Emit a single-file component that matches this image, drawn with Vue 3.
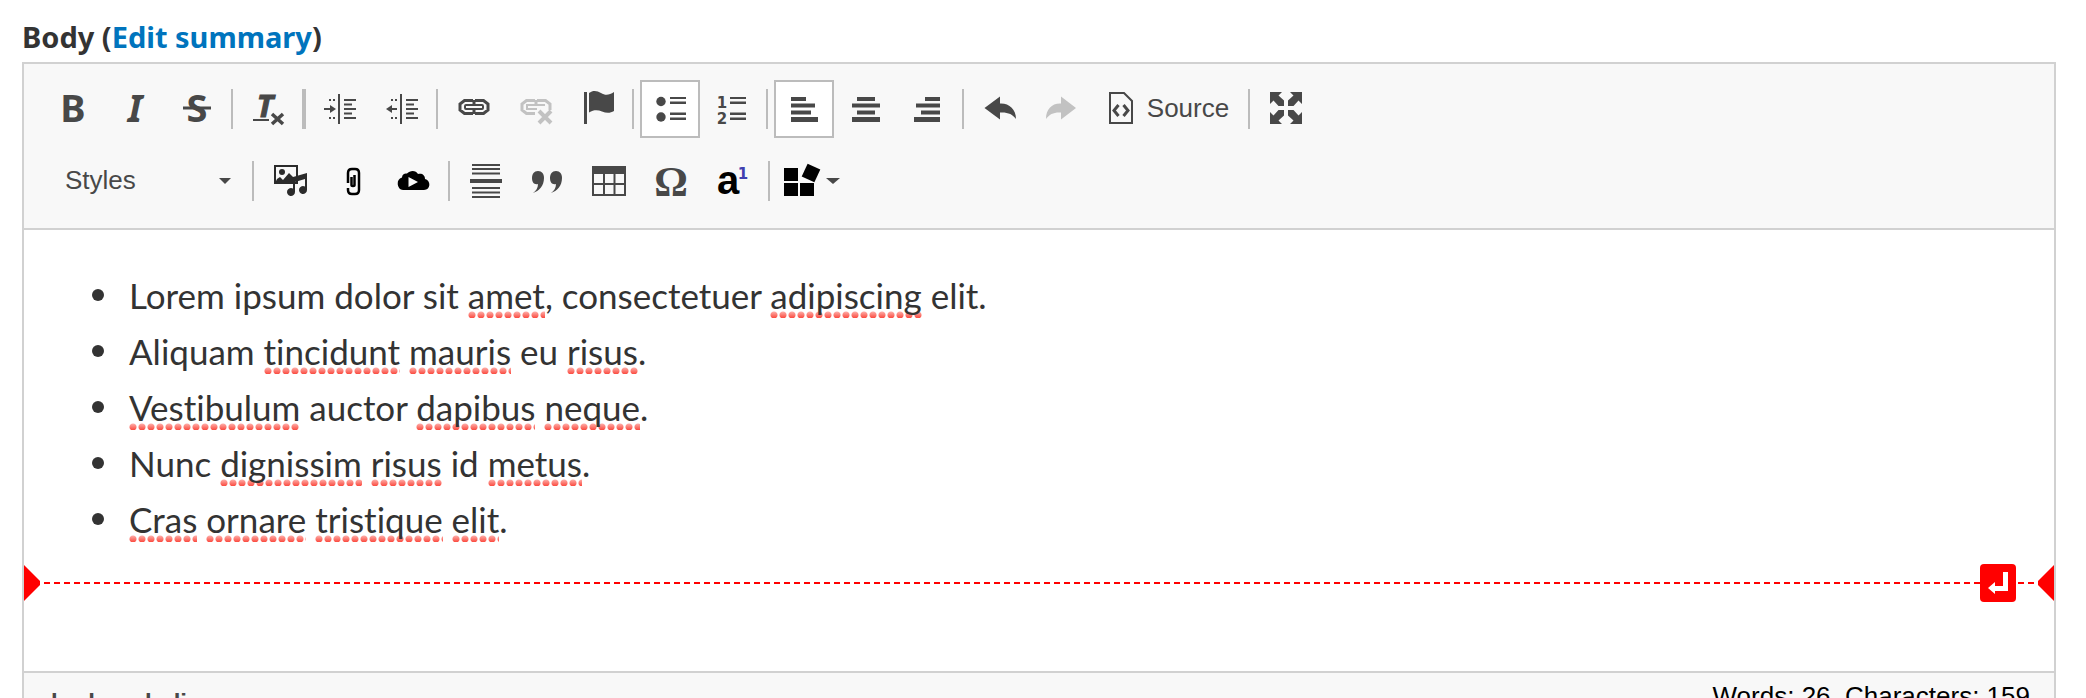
<template>
  <div class="page">
    <div class="field-label">Body (<a href="#summary">Edit summary</a>)</div>

    <div class="editor">
      <div class="toolbar" role="toolbar" aria-label="Editor toolbar">
        <div class="row">
          <button type="button" class="btn" aria-label="Bold">
            <svg class="icon" viewBox="0 0 36 36"><text class="glyph" x="18" y="31" font-size="38">B</text></svg>
          </button>
          <button type="button" class="btn" aria-label="Italic">
            <svg class="icon" viewBox="0 0 36 36"><text class="glyph italic" x="18" y="31" font-size="38">I</text></svg>
          </button>
          <button type="button" class="btn" aria-label="Strikethrough">
            <svg class="icon" viewBox="0 0 36 36">
              <text class="glyph" x="18" y="31" font-size="38">S</text>
              <path d="M4 15.5h28v3H4z" />
            </svg>
          </button>
          <span class="sep" />
          <button type="button" class="btn" aria-label="Remove format">
            <svg class="icon" viewBox="0 0 36 36">
              <text class="glyph italic heavy" x="14" y="26" font-size="31">T</text>
              <path d="M2 28h16v2H2z" />
              <path d="M21 23l11 10M32 23L21 33" class="line" stroke-width="3.5" />
            </svg>
          </button>
          <span class="sep wide" />
          <button type="button" class="btn" aria-label="Increase indent">
            <svg class="icon" viewBox="0 0 36 36">
              <path d="M16 3h2v30h-2zM22 8h12v2H22zM22 12.5h8v2h-8zM22 17h12v2H22zM22 21.5h8v2h-8zM22 26h12v2H22z" />
              <path d="M2 17h6v-3l6 4-6 4v-3H2zM7 8h2v2H7zM11 8h2v2h-2zM7 26h2v2H7zM11 26h2v2h-2z" />
            </svg>
          </button>
          <button type="button" class="btn" aria-label="Decrease indent">
            <svg class="icon" viewBox="0 0 36 36">
              <path d="M16 3h2v30h-2zM22 8h12v2H22zM22 12.5h8v2h-8zM22 17h12v2H22zM22 21.5h8v2h-8zM22 26h12v2H22z" />
              <path d="M13 17H8v-3l-6 4 6 4v-3h5zM7 8h2v2H7zM11 8h2v2h-2zM7 26h2v2H7zM11 26h2v2h-2z" />
            </svg>
          </button>
          <span class="sep" />
          <button type="button" class="btn" aria-label="Link">
            <svg class="icon" viewBox="0 0 36 36">
              <g class="line">
                <path d="M17 9.5H8.5L4 13v6l4.500 3.500H17M19 9.5h8.500L32 13v6l-4.500 3.500H19" stroke-width="3" />
                <rect x="9" y="14" width="18" height="4" rx="1" stroke-width="2" />
                <path d="M18 9v5M18 18v5" stroke-width="3" />
              </g>
            </svg>
          </button>
          <button type="button" class="btn" aria-label="Unlink" disabled>
            <svg class="icon" viewBox="0 0 36 36">
              <g class="line">
                <path d="M17 22.5H8.500L4 19v-6l4.500-3.500H17M19 9.500h8.500L32 13v6" stroke-width="3" />
                <path d="M27 14H9v4h10" stroke-width="2" />
                <path d="M18 9v5" stroke-width="3" />
                <path d="M21 20l12 12M33 20L21 32" stroke-width="4" />
              </g>
            </svg>
          </button>
          <button type="button" class="btn" aria-label="Anchor">
            <svg class="icon" viewBox="0 0 36 36">
              <path d="M4 1h3v32H4zM9 2c4-3 8-2.500 12 0s8 2.500 13-1v19c-4 2.500-8 2-12 .5s-8-2-13 1z" />
            </svg>
          </button>
          <span class="sep" />
          <button type="button" class="btn active" aria-label="Bulleted list" aria-pressed="true">
            <svg class="icon" viewBox="0 0 36 36">
              <circle cx="9" cy="10.5" r="4.7" />
              <circle cx="9" cy="26" r="4.7" />
              <path d="M18 6h16v2H18zM18 10.5h16V13H18zM18 21.500h16V24H18zM18 26.500h16V29H18z" />
            </svg>
          </button>
          <button type="button" class="btn" aria-label="Numbered list">
            <svg class="icon" viewBox="0 0 36 36">
              <text class="digit" x="8" y="17" font-size="15">1</text>
              <text class="digit" x="8" y="33" font-size="15">2</text>
              <path d="M16 6h16v2H16zM16 10.5h16V13H16zM16 21.500h16V24H16zM16 26.500h16V29H16z" />
            </svg>
          </button>
          <span class="sep" />
          <button
            v-for="align in alignments"
            :key="align.name"
            type="button"
            class="btn"
            :class="{ active: align.name === current }"
            :aria-label="align.name"
            :aria-pressed="align.name === current"
            @click="current = align.name"
          >
            <svg class="icon" viewBox="0 0 36 36"><path :d="align.path" /></svg>
          </button>
          <span class="sep" />
          <button type="button" class="btn" aria-label="Undo">
            <svg class="icon" viewBox="0 0 36 36">
              <path d="M2.500 17L18 5.500v7C27 12 34 18 34 28c-3.500-5-8.500-7-16-6.500v7z" />
            </svg>
          </button>
          <button type="button" class="btn" aria-label="Redo" disabled>
            <svg class="icon" viewBox="0 0 36 36">
              <path d="M32 17L17 5.500v7C8 12 2 18 2 28c3.500-5 8-7 15-6.500v7z" />
            </svg>
          </button>
          <button type="button" class="btn source">
            <svg class="icon page-icon" viewBox="0 0 24 36">
              <path class="line" d="M1 2h14l8 8v22H1z" stroke-width="2" />
              <path class="line" d="M9.500 14L5 19.500l4.500 5.500M14.500 14l4.500 5.500-4.500 5.500" stroke-width="3" />
            </svg>
            <span>Source</span>
          </button>
          <span class="sep" />
          <button type="button" class="btn" aria-label="Maximize">
            <svg class="icon" viewBox="0 0 36 36">
              <path
                v-for="turn in [0, 90, 180, 270]"
                :key="turn"
                :transform="`rotate(${turn} 18 17)`"
                d="M2 1h12l-3.500 3.500 5.500 5v5.500h-5.500l-5-5.500L2 13z"
              />
            </svg>
          </button>
        </div>

        <div class="row">
          <label class="styles">
            <select v-model="style" aria-label="Formatting styles">
              <option>Styles</option>
            </select>
            <svg class="caret" viewBox="0 0 14 8"><path d="M1 1h12L7 7z" /></svg>
          </label>
          <span class="sep" />
          <button type="button" class="btn dark" aria-label="Media">
            <svg class="icon" viewBox="0 0 36 36">
              <path class="line" d="M3 3h22v17H3z" stroke-width="2" />
              <circle cx="10" cy="9" r="3" />
              <path d="M3 20l2-4 3-2 3 3 6-7 4 4 14-4v17a4 4 0 1 1-2-3.500V16l-10 3v10a4 4 0 1 1-2-3.500V20z" />
            </svg>
          </button>
          <button type="button" class="btn black" aria-label="Attach file">
            <svg class="icon" viewBox="0 0 36 36">
              <path
                class="line"
                d="M14 20V10q0-4 4-4h3q4 0 4 4v17q0 4-4 4h-3q-4 0-4-4v-2M20.500 12v10q0 1-1.500 1t-1.500-1v-8"
                stroke-width="2.500"
              />
            </svg>
          </button>
          <button type="button" class="btn black" aria-label="Video">
            <svg class="icon" viewBox="0 0 36 36">
              <path
                fill-rule="evenodd"
                d="M7 27a6.500 6.500 0 0 1-1-12.500C6 11 9 10 11 10.500 14 7 20 7 22 11c4-1 7 1 7 5 6 1 6 11-1 11zM12.500 14v10l9.500-5z"
              />
            </svg>
          </button>
          <span class="sep" />
          <button type="button" class="btn" aria-label="Horizontal line">
            <svg class="icon" viewBox="0 0 36 36">
              <path d="M4 1h28v2H4zM4 5h28v2H4zM4 9.500h28v2H4zM2 16h32v4H2zM4 24h28v2H4zM4 28.500h28v2H4zM4 33h28v2H4z" />
            </svg>
          </button>
          <button type="button" class="btn" aria-label="Block quote">
            <svg class="icon" viewBox="0 0 36 36">
              <path d="M3 30c3-2 5-5 5-9-4 1-6-2-6-6s2-7 6-7 6 3 6 7c0 8-5 13-11 15zM21 30c3-2 5-5 5-9-4 1-6-2-6-6s2-7 6-7 6 3 6 7c0 8-5 13-11 15z" />
            </svg>
          </button>
          <button type="button" class="btn" aria-label="Table">
            <svg class="icon" viewBox="0 0 36 36">
              <path
                fill-rule="evenodd"
                d="M0 3h34v30H0zM2 11v9h9v-9zM13 11v9h8.500v-9zM23.500 11v9H32v-9zM2 22v9h9v-9zM13 22v9h8.500v-9zM23.500 22v9H32v-9z"
              />
            </svg>
          </button>
          <button type="button" class="btn" aria-label="Special character">
            <svg class="icon" viewBox="0 0 36 36"><text class="omega" x="17" y="33" font-size="42">Ω</text></svg>
          </button>
          <button type="button" class="btn black" aria-label="Footnote">
            <svg class="icon" viewBox="0 0 36 36">
              <text class="letter" x="12" y="31" font-size="40">a</text>
              <text class="digit note" x="27" y="16" font-size="15">1</text>
            </svg>
          </button>
          <span class="sep" />
          <button type="button" class="btn black insert" aria-label="Insert block">
            <svg class="icon" viewBox="0 0 36 36">
              <path d="M0 5h14v13H0zM0 20h14v13H0zM16 20h14v13H16z" />
              <rect x="20" y="3" width="14" height="14" transform="rotate(25 27 10)" />
            </svg>
            <svg class="caret" viewBox="0 0 14 8"><path d="M0 1h14L7 7z" /></svg>
          </button>
        </div>
      </div>

      <div class="content">
        <ul>
          <li v-for="(line, i) in lines" :key="i">
            <template v-for="(part, j) in line" :key="j">
              <span v-if="part.misspelled" class="misspelled">{{ part.text }}</span>
              <template v-else>{{ part.text }}</template>
            </template>
          </li>
        </ul>

        <div class="magic-line">
          <svg class="triangle" viewBox="0 0 16 36"><path d="M0 0l16 16v4L0 36z" /></svg>
          <span class="dash grow" />
          <button type="button" class="enter" aria-label="Insert paragraph here">
            <svg viewBox="0 0 36 38"><path d="M23 8h5v19H15v3l-7-6 7-6v4h8z" /></svg>
          </button>
          <span class="dash tail" />
          <svg class="triangle" viewBox="0 0 16 36"><path d="M16 0L0 16v4l16 16z" /></svg>
        </div>
      </div>

      <div class="status">
        <nav class="path" aria-label="Elements path">
          <a v-for="tag in ['body', 'ul', 'li']" :key="tag" :href="`#${tag}`">{{ tag }}</a>
        </nav>
        <span class="count">Words: 26, Characters: 159</span>
      </div>
    </div>
  </div>
</template>

<script setup>
import { ref } from 'vue'

const current = ref('Align left')
const style = ref('Styles')

const alignments = [
  { name: 'Align left', path: 'M5 6h15v4H5zM5 12.5h24v4H5zM5 19.5h20v4H5zM5 26h27v5H5z' },
  { name: 'Center', path: 'M9 6h18v4H9zM4 12.5h28v4H4zM9 19.5h18v4H9zM4 26h28v5H4z' },
  { name: 'Align right', path: 'M15 6h15v4H15zM6 12.5h24v4H6zM11 19.5h19v4H11zM4 26h26v5H4z' },
]

// words between underscores are flagged by the spell checker
const lines = [
  'Lorem ipsum dolor sit _amet_, consectetuer _adipiscing_ elit.',
  'Aliquam _tincidunt_ _mauris_ eu _risus_.',
  '_Vestibulum_ auctor _dapibus_ _neque_.',
  'Nunc _dignissim_ _risus_ id _metus_.',
  '_Cras_ _ornare_ _tristique_ _elit_.',
].map((line) => line.split('_').map((text, i) => ({ text, misspelled: i % 2 === 1 })))
</script>

<style>
body {
  margin: 0;
  background: #fff;
}
</style>

<style scoped>
.page {
  box-sizing: border-box;
  height: 100vh;
  overflow: hidden;
  padding: 17px 30px 0 22px;
  color: #333;
  font-family: 'Liberation Sans', Arial, sans-serif;
}

.field-label {
  margin-bottom: 5px;
  font: bold 29px/40px 'Noto Sans', 'Lucida Grande', sans-serif;
}

.field-label a {
  color: #0074bd;
  text-decoration: none;
}

.editor {
  border: 2px solid #d1d1d1;
}

.toolbar {
  display: flex;
  flex-direction: column;
  gap: 14px;
  padding: 16px 19px 18px;
  border-bottom: 2px solid #d1d1d1;
  background: #f8f8f8;
}

.row {
  display: flex;
  align-items: center;
}

.btn {
  display: flex;
  align-items: center;
  justify-content: center;
  box-sizing: border-box;
  width: 60px;
  height: 58px;
  padding: 0;
  border: 2px solid transparent;
  background: none;
  color: #484848;
  font: 26px/30px 'Liberation Sans', Arial, sans-serif;
}

.btn + .btn {
  margin-left: 2px;
}

.btn.active {
  border-color: #bcbcbc;
  background: #fff;
}

.btn:disabled {
  color: #c2c2c2;
}

.btn.dark {
  color: #2b2b2b;
}

.btn.black {
  color: #000;
}

.btn.source {
  gap: 14px;
  width: 150px;
}

.source span {
  padding-bottom: 2px;
}

.btn.insert {
  gap: 6px;
  width: 72px;
}

.icon {
  width: 36px;
  height: 36px;
  overflow: visible;
  fill: currentColor;
}

.page-icon {
  width: 24px;
}

.icon .line {
  fill: none;
  stroke: currentColor;
}

.glyph {
  font-family: 'Noto Sans', sans-serif;
  font-weight: bold;
  text-anchor: middle;
}

.italic {
  font-style: italic;
}

.heavy {
  stroke: currentColor;
  stroke-width: 1px;
}

.digit {
  font-family: 'DejaVu Sans', sans-serif;
  font-weight: bold;
  text-anchor: middle;
}

.letter {
  font-family: 'Liberation Sans', sans-serif;
  font-weight: bold;
  text-anchor: middle;
}

.note {
  fill: #4040b0;
}

.omega {
  font-family: 'Liberation Serif', serif;
  font-weight: bold;
  text-anchor: middle;
}

.sep {
  width: 2px;
  height: 40px;
  margin: 0 6px 0 4px;
  background: #bcbcbc;
}

.sep.wide {
  width: 4px;
  margin: 0 4px 0 3px;
}

.caret {
  width: 14px;
  height: 8px;
  fill: #484848;
}

.styles {
  display: flex;
  align-items: center;
  width: 205px;
  height: 58px;
}

.styles select {
  flex: 1;
  height: 100%;
  margin-right: -32px;
  padding: 0 32px 3px 22px;
  border: 0;
  appearance: none;
  background: none;
  color: #484848;
  font: 26px/30px 'Liberation Sans', Arial, sans-serif;
}

.styles .caret {
  margin-right: 16px;
  pointer-events: none;
}

.content {
  padding: 37px 0 69px;
  background: #fff;
}

.content ul {
  margin: 0;
  padding: 0 40px 0 105px;
  list-style: none;
  font: 35px/56px Lato, 'Proxima Nova', sans-serif;
  font-variant-ligatures: none;
}

.content li {
  display: flow-root;
}

.content li::before {
  content: '';
  float: left;
  width: 12px;
  height: 12px;
  margin: 22px 0 0 -37px;
  border-radius: 50%;
  background: #333;
}

.misspelled {
  padding-bottom: 2px;
  background:
    linear-gradient(rgba(255, 255, 255, 0.6), rgba(255, 255, 255, 0)) 0 100% / 9px 7px repeat-x,
    radial-gradient(circle at 4px 4px, #fb4b40 3px, transparent 4px) 0 100% / 9px 7px repeat-x;
}

.magic-line {
  display: flex;
  align-items: center;
  margin-top: 17px;
}

.triangle {
  width: 16px;
  height: 36px;
  fill: #f00;
}

.dash {
  height: 2px;
  background: repeating-linear-gradient(90deg, #f00 0 6px, transparent 6px 10px);
}

.dash.grow {
  flex: 1;
  margin-left: 4px;
}

.dash.tail {
  width: 16px;
  margin: 0 4px 0 2px;
}

.enter {
  width: 36px;
  height: 38px;
  padding: 0;
  border: 0;
  border-radius: 4px;
  background: #f00;
}

.enter svg {
  display: block;
  fill: #fff;
}

.status {
  display: flex;
  align-items: flex-start;
  justify-content: space-between;
  padding: 8px 24px 16px 16px;
  border-top: 2px solid #d1d1d1;
  background: #f8f8f8;
}

.path {
  display: flex;
  padding-top: 7px;
}

.path a {
  padding: 0 11px;
  color: #484848;
  font: bold 24px/30px 'Liberation Sans', Arial, sans-serif;
  text-decoration: none;
}

.count {
  color: #000;
  font-size: 26px;
  line-height: 30px;
}
</style>
